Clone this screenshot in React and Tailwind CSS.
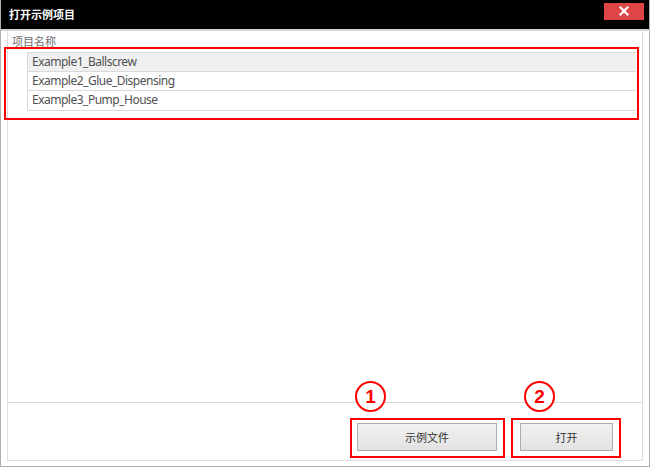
import React from "react";

const cjk = { fontFamily: '"Noto Sans CJK SC", "Noto Sans", sans-serif' };
const latin = { fontFamily: '"Noto Sans", "Noto Sans CJK SC", sans-serif' };

function Circle({ n, left }) {
  return (
    <div
      className="absolute top-[381px] w-[31px] h-[31px] rounded-full border-2 border-[#ff0000] bg-white flex items-center justify-center text-[#ff0000] text-[19px] font-bold leading-none"
      style={{ left, fontFamily: '"Liberation Sans", Arial, sans-serif' }}
    >
      {n}
    </div>
  );
}

export default function App() {
  const rows = ["Example1_Ballscrew", "Example2_Glue_Dispensing", "Example3_Pump_House"];
  return (
    <div className="relative w-[650px] h-[467px] bg-white border-x border-b border-[#b0b0b0] flex flex-col overflow-hidden">
      {/* title bar */}
      <div className="h-[29px] bg-black flex items-center justify-between pl-[8px] pr-[5px] shrink-0">
        <span className="text-white text-[11px] font-bold" style={cjk}>打开示例项目</span>
        <div className="w-[40px] h-[17px] bg-[#e04545] flex items-center justify-center mb-[7px]">
          <svg width="10" height="10" viewBox="0 0 10 10">
            <path d="M1.5 1.5 L8.5 8.5 M8.5 1.5 L1.5 8.5" stroke="white" strokeWidth="2.2" strokeLinecap="square" />
          </svg>
        </div>
      </div>
      <div className="h-[2px] bg-[#d6d6d6] shrink-0" />
      {/* body */}
      <div className="flex-1 flex flex-col pl-[6px] pr-[6px] pb-[5px]">
        <div className="flex-1 flex flex-col border-x border-b border-[#dcdcdc]">
          {/* list */}
          <div className="h-[372px] border-b border-[#d9d9d9] flex flex-col shrink-0">
            <div className="h-[21px] pl-[4px] flex items-center text-[11px] text-[#6e6e6e]" style={cjk}>
              项目名称
            </div>
            <div className="ml-[19px] mr-[6px] border-l border-[#dadada]">
              {rows.map((r, i) => (
                <div
                  key={r}
                  className={
                    "h-[19.5px] pl-[4px] flex items-center text-[12px] tracking-[-0.5px] text-[#505050] border-b border-[#dadada] " +
                    (i === 0 ? "bg-[#f0f0f0] border-t" : "")
                  }
                  style={latin}
                >
                  {r}
                </div>
              ))}
            </div>
          </div>
          {/* buttons */}
          <div className="flex-1 flex justify-end items-start pt-[20px] pr-[29px] gap-[23px]">
            <button
              className="w-[140px] h-[28px] border border-[#acacac] bg-gradient-to-b from-[#f2f2f2] to-[#e2e2e2] text-[11px] text-[#333]"
              style={cjk}
            >
              示例文件
            </button>
            <button
              className="w-[93px] h-[28px] border border-[#acacac] bg-gradient-to-b from-[#f2f2f2] to-[#e2e2e2] text-[11px] text-[#333]"
              style={cjk}
            >
              打开
            </button>
          </div>
        </div>
      </div>

      {/* annotations */}
      <div className="absolute left-[3px] top-[47px] w-[635px] h-[73px] border-2 border-[#ff0000]" />
      <div className="absolute left-[349px] top-[418px] w-[155px] h-[40px] border-2 border-[#ff0000]" />
      <div className="absolute left-[510px] top-[418px] w-[110px] h-[40px] border-2 border-[#ff0000]" />
      <Circle n="1" left="354px" />
      <Circle n="2" left="523px" />
    </div>
  );
}
